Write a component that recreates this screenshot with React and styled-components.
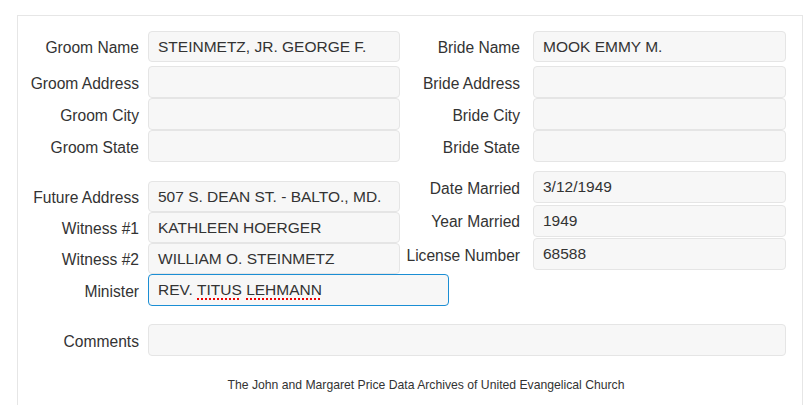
import React from "react";
import styled, { createGlobalStyle } from "styled-components";

const GlobalStyle = createGlobalStyle`
  body {
    margin: 0;
    background: #fff;
    color: #333;
    font-family: "Liberation Sans", Arial, sans-serif;
  }
`;

const Page = styled.div`
  padding: 15px 2px 0 17px;
`;

const Panel = styled.div`
  border: 1px solid #e6e6e6;
  border-bottom: none;
  padding: 15px 16px 24px 0;
`;

const Columns = styled.div`
  display: grid;
  grid-template-columns: ${(p) => (p.$single ? "1fr" : "382px 1fr")};
  align-items: start;
  margin-top: ${(p) => p.$top || 0}px;
`;

const Group = styled.div`
  display: flex;
  flex-direction: column;
  gap: ${(p) => p.$gap || 0}px;
  padding-top: ${(p) => p.$offset || 0}px;
`;

const Row = styled.div`
  display: grid;
  grid-template-columns: ${(p) => p.$labelWidth}px ${(p) => (p.$fill ? "1fr" : "auto")};
  align-items: center;
  margin-bottom: ${(p) => p.$after || 0}px;
`;

const Label = styled.label`
  text-align: right;
  padding-right: ${(p) => p.$pad}px;
  padding-top: 3px;
  font-size: 15.6px;
  white-space: nowrap;
`;

const Field = styled.div`
  box-sizing: border-box;
  display: flex;
  align-items: center;
  width: ${(p) => (p.$width ? `${p.$width}px` : "100%")};
  height: ${(p) => p.$h || 32}px;
  padding: 0 9px;
  background: #f7f7f7;
  border: 1px solid ${(p) => (p.$focus ? "#1b8ed4" : "#e5e5e5")};
  border-radius: 4px;
  font-size: 15.5px;
  color: #333;
  white-space: nowrap;
`;

const Misspelled = styled.span`
  text-decoration: underline dotted #e00;
  text-decoration-thickness: 2px;
  text-underline-offset: 3px;
`;

const Footer = styled.div`
  margin-top: 22px;
  padding-left: 48px;
  text-align: center;
  font-size: 12.2px;
  line-height: 14px;
`;

const LeftField = ({ label, value, after, width, h, focus, children }) => (
  <Row $labelWidth={130} $after={after}>
    <Label $pad={9}>{label}</Label>
    <Field $width={width || 252} $h={h} $focus={focus}>
      {children || value}
    </Field>
  </Row>
);

const RightField = ({ label, value, after, h }) => (
  <Row $labelWidth={133} $fill $after={after}>
    <Label $pad={13}>{label}</Label>
    <Field $h={h}>{value}</Field>
  </Row>
);

export default function App() {
  return (
    <Page>
      <GlobalStyle />
      <Panel>
        <Columns>
          <Group>
            <LeftField label="Groom Name" value="STEINMETZ, JR. GEORGE F." h={31} after={4} />
            <LeftField label="Groom Address" value="" />
            <LeftField label="Groom City" value="" />
            <LeftField label="Groom State" value="" />
          </Group>
          <Group>
            <RightField label="Bride Name" value="MOOK EMMY M." h={31} after={4} />
            <RightField label="Bride Address" value="" />
            <RightField label="Bride City" value="" />
            <RightField label="Bride State" value="" />
          </Group>
        </Columns>

        <Columns $top={9}>
          <Group $offset={10}>
            <LeftField label="Future Address" value="507 S. DEAN ST. - BALTO., MD." h={31} />
            <LeftField label="Witness #1" value="KATHLEEN HOERGER" h={31} />
            <LeftField label="Witness #2" value="WILLIAM O. STEINMETZ" h={31} />
            <LeftField label="Minister" width={301} focus>
              REV.&nbsp;<Misspelled>TITUS</Misspelled>&nbsp;<Misspelled>LEHMANN</Misspelled>
            </LeftField>
          </Group>
          <Group $gap={1.5}>
            <RightField label="Date Married" value="3/12/1949" />
            <RightField label="Year Married" value="1949" />
            <RightField label="License Number" value="68588" />
          </Group>
        </Columns>

        <Columns $top={18} $single>
          <Row $labelWidth={130} $fill>
            <Label $pad={9}>Comments</Label>
            <Field />
          </Row>
        </Columns>

        <Footer>The John and Margaret Price Data Archives of United Evangelical Church</Footer>
      </Panel>
    </Page>
  );
}
